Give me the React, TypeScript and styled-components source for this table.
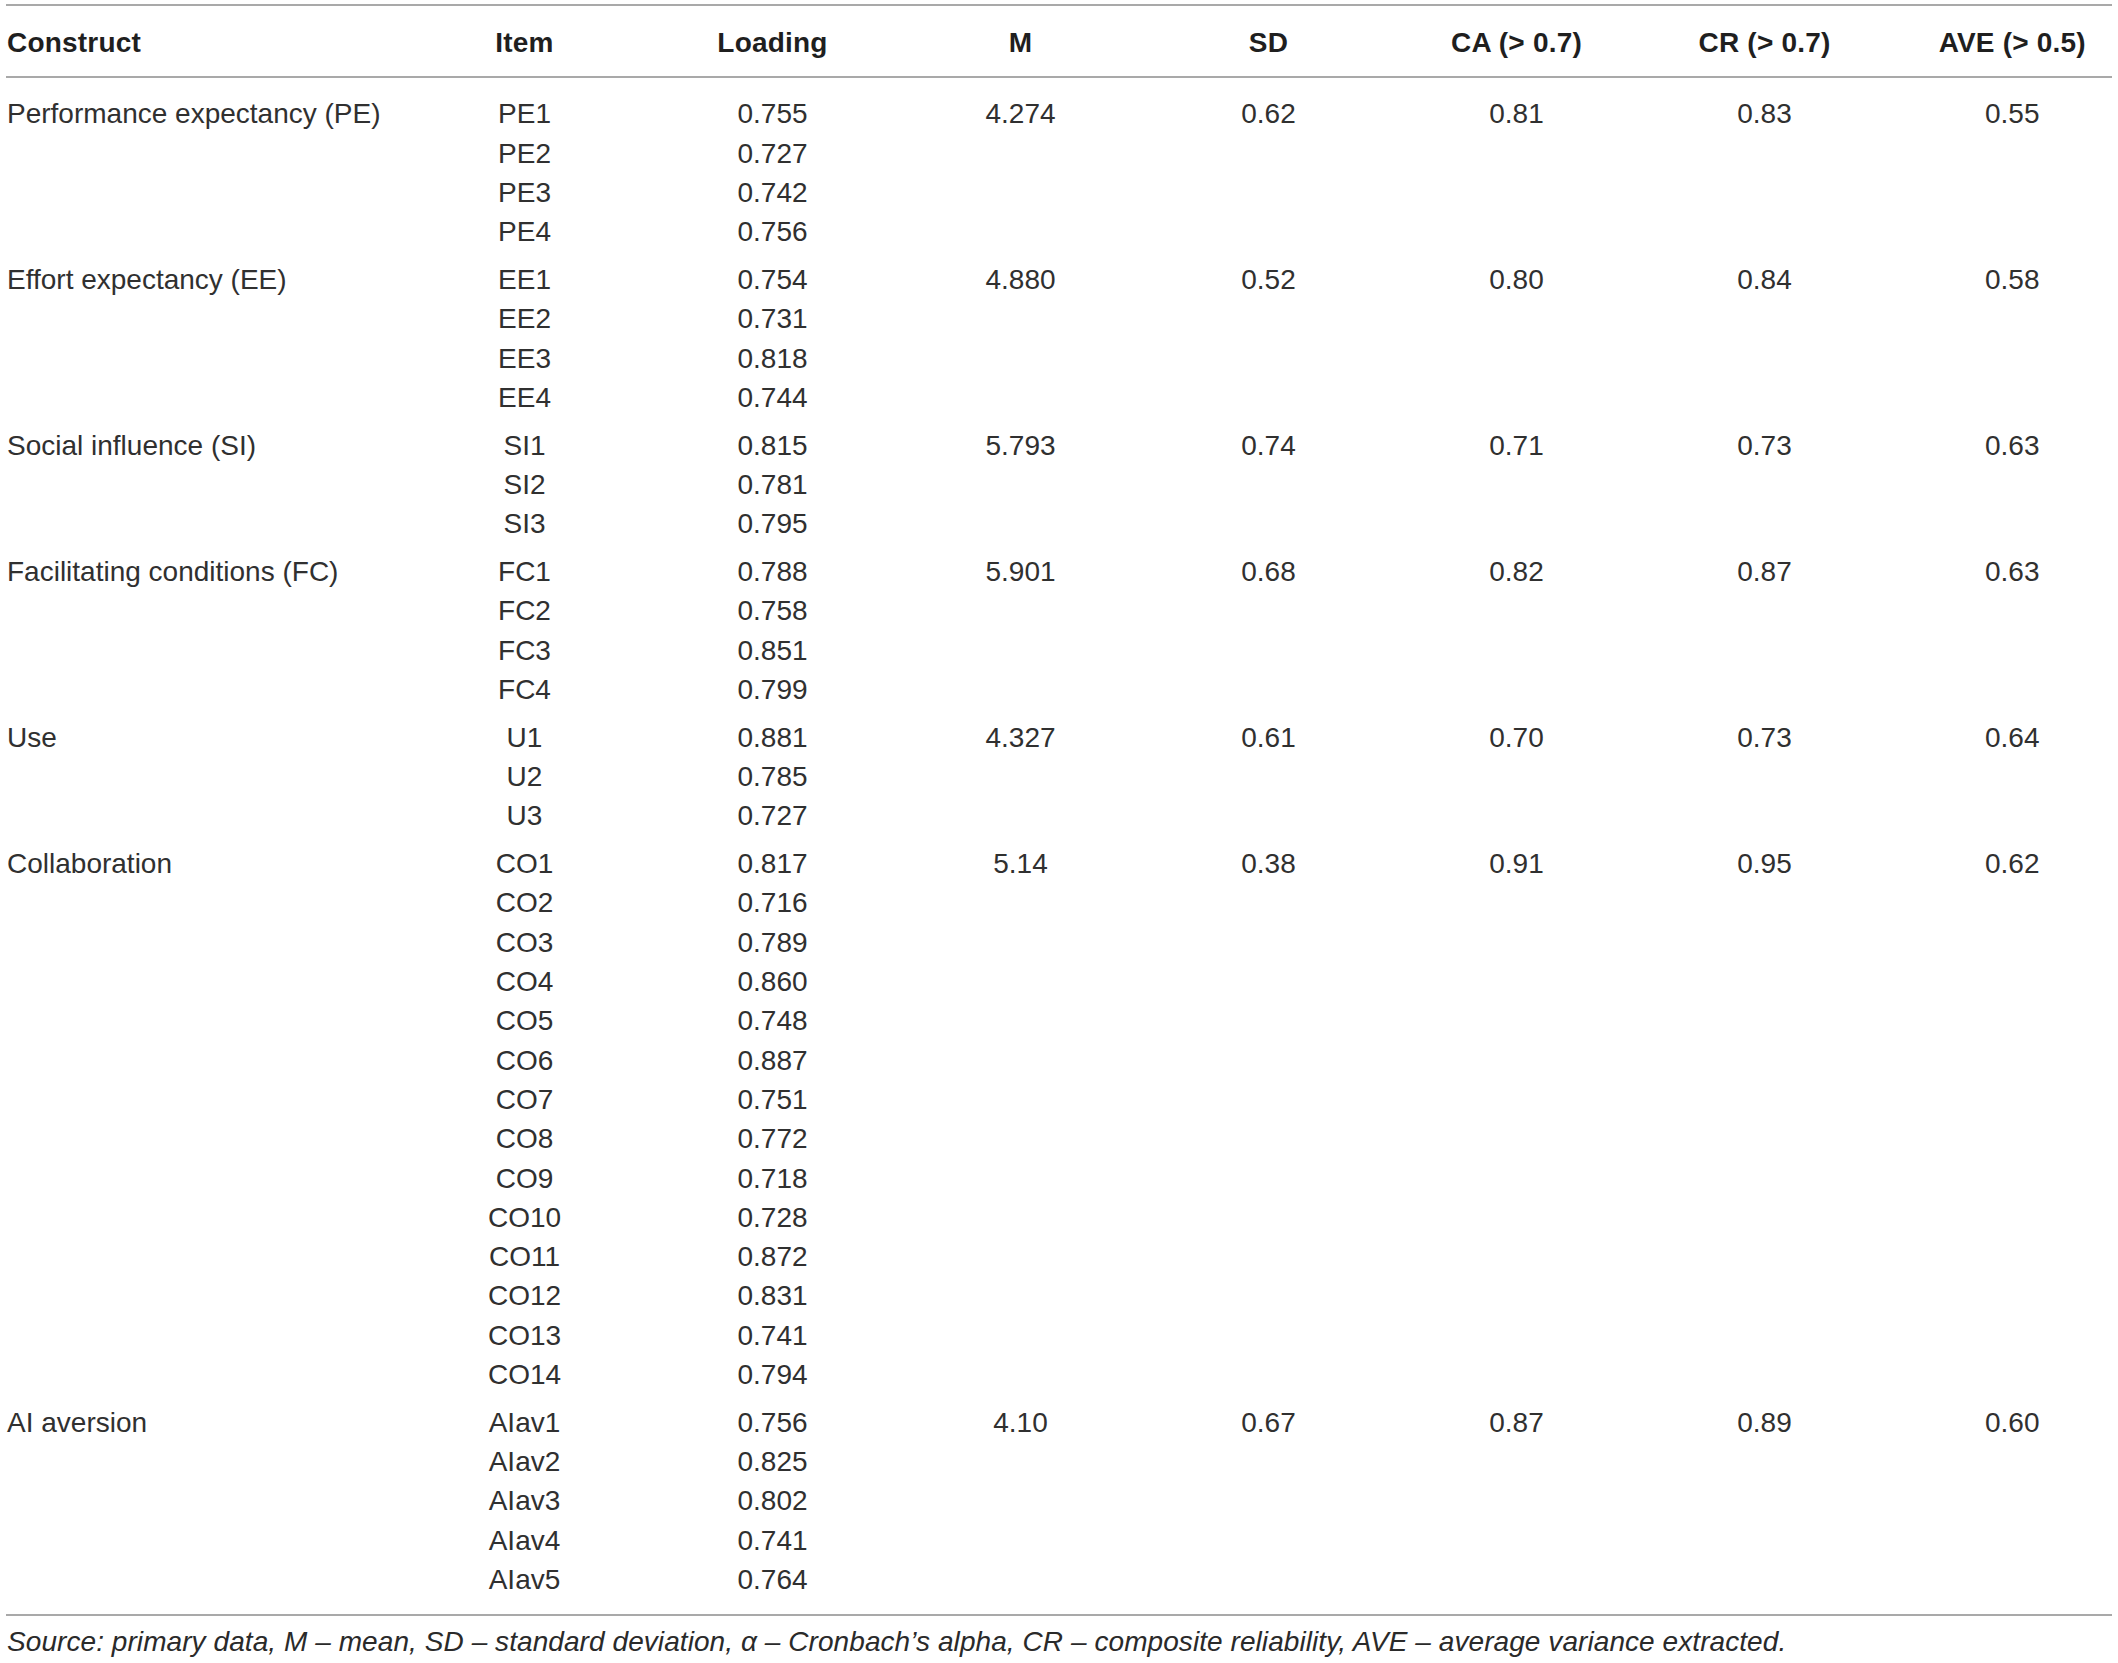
import React from 'react';
import styled, { createGlobalStyle } from 'styled-components';

const GlobalStyle = createGlobalStyle`
  html, body {
    margin: 0;
    padding: 0;
    background: #ffffff;
  }
  body {
    font-family: "Liberation Sans", Arial, Helvetica, sans-serif;
    color: #303030;
  }
`;

const COLUMNS = '394.5px repeat(6, 248px) 1fr';
const ROW = '39.3px';

const Page = styled.div`
  width: 2118px;
  padding-top: 4px;
`;

const Table = styled.div`
  margin-left: 6px;
  width: 2106px;
`;

const HeaderRow = styled.div`
  display: grid;
  grid-template-columns: ${COLUMNS};
  border-top: 2px solid #a9a9a9;
  border-bottom: 2px solid #a9a9a9;
  padding: 17px 0 14px;
`;

const HeadCell = styled.div<{ $align?: 'left' | 'center'; $last?: boolean }>`
  font-size: 28px;
  font-weight: 700;
  line-height: ${ROW};
  color: #1f1f1f;
  letter-spacing: 0.2px;
  text-align: ${(p) => p.$align || 'center'};
  padding-left: ${(p) => (p.$last ? '24px' : p.$align === 'left' ? '1px' : '0')};
  white-space: nowrap;
`;

const Body = styled.div`
  display: flex;
  flex-direction: column;
  gap: 8.5px;
  padding: 16px 0 15px;
  border-bottom: 2px solid #a9a9a9;
`;

const Group = styled.div`
  display: grid;
  grid-template-columns: ${COLUMNS};
  align-items: start;
`;

const ConstructCell = styled.div`
  font-size: 28px;
  line-height: ${ROW};
  padding-left: 1px;
  white-space: nowrap;
`;

const Stack = styled.div`
  display: flex;
  flex-direction: column;
  align-items: center;
`;

const ValueCell = styled.div<{ $last?: boolean }>`
  font-size: 28px;
  line-height: ${ROW};
  text-align: center;
  padding-left: ${(p) => (p.$last ? '24px' : '0')};
  white-space: nowrap;
`;

const Footnote = styled.div`
  font-size: 28px;
  font-style: italic;
  line-height: ${ROW};
  letter-spacing: 0.07px;
  padding: 6px 0 0 1px;
  white-space: nowrap;
  color: #2a2a2a;
`;

interface Construct {
  name: string;
  items: [string, string][];
  m: string;
  sd: string;
  ca: string;
  cr: string;
  ave: string;
}

const data: Construct[] = [
  {
    name: 'Performance expectancy (PE)',
    items: [['PE1', '0.755'], ['PE2', '0.727'], ['PE3', '0.742'], ['PE4', '0.756']],
    m: '4.274', sd: '0.62', ca: '0.81', cr: '0.83', ave: '0.55',
  },
  {
    name: 'Effort expectancy (EE)',
    items: [['EE1', '0.754'], ['EE2', '0.731'], ['EE3', '0.818'], ['EE4', '0.744']],
    m: '4.880', sd: '0.52', ca: '0.80', cr: '0.84', ave: '0.58',
  },
  {
    name: 'Social influence (SI)',
    items: [['SI1', '0.815'], ['SI2', '0.781'], ['SI3', '0.795']],
    m: '5.793', sd: '0.74', ca: '0.71', cr: '0.73', ave: '0.63',
  },
  {
    name: 'Facilitating conditions (FC)',
    items: [['FC1', '0.788'], ['FC2', '0.758'], ['FC3', '0.851'], ['FC4', '0.799']],
    m: '5.901', sd: '0.68', ca: '0.82', cr: '0.87', ave: '0.63',
  },
  {
    name: 'Use',
    items: [['U1', '0.881'], ['U2', '0.785'], ['U3', '0.727']],
    m: '4.327', sd: '0.61', ca: '0.70', cr: '0.73', ave: '0.64',
  },
  {
    name: 'Collaboration',
    items: [
      ['CO1', '0.817'], ['CO2', '0.716'], ['CO3', '0.789'], ['CO4', '0.860'],
      ['CO5', '0.748'], ['CO6', '0.887'], ['CO7', '0.751'], ['CO8', '0.772'],
      ['CO9', '0.718'], ['CO10', '0.728'], ['CO11', '0.872'], ['CO12', '0.831'],
      ['CO13', '0.741'], ['CO14', '0.794'],
    ],
    m: '5.14', sd: '0.38', ca: '0.91', cr: '0.95', ave: '0.62',
  },
  {
    name: 'AI aversion',
    items: [['AIav1', '0.756'], ['AIav2', '0.825'], ['AIav3', '0.802'], ['AIav4', '0.741'], ['AIav5', '0.764']],
    m: '4.10', sd: '0.67', ca: '0.87', cr: '0.89', ave: '0.60',
  },
];

const headers = ['Item', 'Loading', 'M', 'SD', 'CA (> 0.7)', 'CR (> 0.7)'];

const App: React.FC = () => {
  return (
    <Page>
      <GlobalStyle />
      <Table>
        <HeaderRow>
          <HeadCell $align="left">Construct</HeadCell>
          {headers.map((h) => (
            <HeadCell key={h}>{h}</HeadCell>
          ))}
          <HeadCell $last>AVE (&gt; 0.5)</HeadCell>
        </HeaderRow>

        <Body>
          {data.map((c) => (
            <Group key={c.name}>
              <ConstructCell>{c.name}</ConstructCell>
              <Stack>
                {c.items.map(([item]) => (
                  <ValueCell key={item}>{item}</ValueCell>
                ))}
              </Stack>
              <Stack>
                {c.items.map(([item, loading]) => (
                  <ValueCell key={item}>{loading}</ValueCell>
                ))}
              </Stack>
              <ValueCell>{c.m}</ValueCell>
              <ValueCell>{c.sd}</ValueCell>
              <ValueCell>{c.ca}</ValueCell>
              <ValueCell>{c.cr}</ValueCell>
              <ValueCell $last>{c.ave}</ValueCell>
            </Group>
          ))}
        </Body>

        <Footnote>
          Source: primary data, M – mean, SD – standard deviation, α – Cronbach’s alpha, CR – composite
          reliability, AVE – average variance extracted.
        </Footnote>
      </Table>
    </Page>
  );
};

export default App;
